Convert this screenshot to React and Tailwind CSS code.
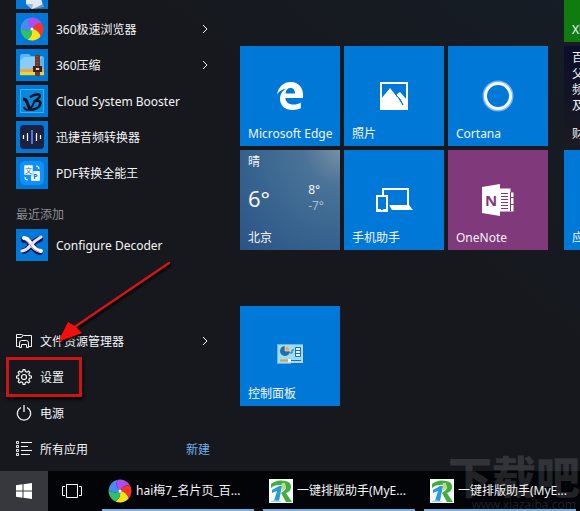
import clsx from 'clsx';

// 32px square behind every entry of the program list
function AppIcon({ children }) {
  return (
    <svg viewBox="0 0 32 32" className="h-8 w-8 shrink-0 bg-[#0078d7]" aria-hidden="true">
      {children}
    </svg>
  );
}

const PETALS = [
  { color: '#b04df0', turn: -12 },
  { color: '#f5352c', turn: 60 },
  { color: '#f9e21c', turn: 132 },
  { color: '#2fc06a', turn: 204 },
  { color: '#4a8af5', turn: 276 },
];

function Pinwheel() {
  return (
    <g>
      {PETALS.map(({ color, turn }) => (
        <path
          key={turn}
          d="M12 12Q8 6 12 .5A11.500 11.500 0 0 1 22.900 8.400Q16.500 6.300 12 12Z"
          fill={color}
          transform={`rotate(${turn} 12 12)`}
        />
      ))}
      <circle cx="12" cy="12" r="1.500" fill="#fff" />
    </g>
  );
}

function NotepadIcon() {
  return (
    <AppIcon>
      <path d="M10 20L24 16L27 29L16 32L10 27Z" fill="#dfe9f3" />
      <path d="M10 27L16 32L17 27Z" fill="#9fb9d3" />
      <path d="M27 27L28 30L17 32Z" fill="#7f97ad" />
    </AppIcon>
  );
}

function BrowserIcon() {
  return (
    <AppIcon>
      <g transform="translate(4 4)">
        <Pinwheel />
      </g>
    </AppIcon>
  );
}

function ZipIcon() {
  return (
    <AppIcon>
      <path d="M4 7Q4 5 6 5H13L15 7H26Q28 7 28 9V20H4Z" fill="#5db4ee" />
      <path d="M8 8H26L16 20H4V12Z" fill="#86cdf8" />
      <rect x="4" y="20" width="24" height="3" fill="#f4a53a" />
      <rect x="4" y="23" width="24" height="3" fill="#d9d85a" />
      <rect x="4" y="26" width="24" height="1" fill="#4a8f4d" />
      <rect x="19" y="6" width="5" height="21" rx="1" fill="#73341f" />
      <path d="M21 7V18" stroke="#b26d44" strokeDasharray="1 2" />
      <rect x="18" y="18" width="7" height="4" fill="none" stroke="#3a2017" strokeWidth="2" />
      <rect x="20" y="19" width="3" height="2" fill="#e9c79a" />
    </AppIcon>
  );
}

function BoosterIcon() {
  return (
    <AppIcon>
      <rect x="4.500" y="4.500" width="23" height="23" fill="#0b87dc" stroke="#2fb5f7" />
      <g fill="none" stroke="#04121f" strokeLinejoin="round">
        <path d="M7 14Q10 14 11 17Q12 21 14 24" strokeWidth="3" />
        <path d="M8 22Q9 26 14 24Q17 21 19 15" strokeWidth="2" />
        <path d="M14 12Q21 8 23.500 10Q25 12 19 16Q24 15 24.500 18Q24 23 17 24.500Q14 25 12 24" strokeWidth="2.500" />
      </g>
    </AppIcon>
  );
}

function AudioIcon() {
  return (
    <AppIcon>
      <rect x="4" y="4" width="24" height="24" rx="4" fill="#1b2140" />
      <path d="M7.500 14V18M24.500 14V18" stroke="#fff" strokeWidth="1.200" />
      <path d="M11.500 12V20M20.500 12V20" stroke="#fff" strokeWidth="1.200" />
      <path d="M16 9V23" stroke="#5272e6" strokeWidth="2" />
    </AppIcon>
  );
}

function PdfIcon() {
  return (
    <AppIcon>
      <rect x="4" y="4" width="24" height="24" rx="5" fill="#1190fb" />
      <rect x="15" y="14" width="9" height="10" rx="1" fill="#e6f5ff" />
      <rect x="8" y="8" width="9" height="10" rx="1" fill="#fff" stroke="#1190fb" strokeWidth=".5" />
      <path d="M20 9Q23 9 23 12M9 20Q9 23 12 23" fill="none" stroke="#e6f5ff" strokeWidth="1.200" />
      <text x="12.500" y="15.500" fontSize="7" textAnchor="middle" fill="#1473c8">文</text>
      <text x="19.500" y="21.500" fontSize="7" fontWeight="700" textAnchor="middle" fill="#1473c8">P</text>
    </AppIcon>
  );
}

function DecoderIcon() {
  return (
    <AppIcon>
      <g fill="none" strokeLinecap="round" strokeLinejoin="round">
        <path d="M8 11Q11 10 15 15Q19 22 24 23" stroke="#0d1464" strokeWidth="6" />
        <path d="M24 10Q18 12 14 17Q10 22 8 22" stroke="#0d1464" strokeWidth="6" />
        <path d="M8 9Q12 9 15 15Q19 21 25 22" stroke="#fff" strokeWidth="4" />
        <path d="M25 8Q18 12 14 17Q11 21 6 22" stroke="#e4e4ea" strokeWidth="3" />
        <path d="M9 11Q13 13 15 17Q18 22 23 23" stroke="#a5a3b4" />
      </g>
    </AppIcon>
  );
}

function ExplorerIcon() {
  return (
    <svg viewBox="0 0 16 16" className="h-4 w-4 shrink-0" fill="none" stroke="currentColor" aria-hidden="true">
      <path d="M3 13.500H.5V1.500H5.500L7.500 2.500H15.500V13.500H13" />
      <path d="M.5 4.500H5L7.500 2.500" />
      <path d="M3.500 14.500V10Q3.500 7.500 5.500 7.500H10.500Q12.500 7.500 12.500 10V14.500H10.500V11.500H5.500V14.500Z" />
    </svg>
  );
}

function GearIcon() {
  return (
    <svg viewBox="0 0 16 16" className="h-4 w-4 shrink-0" fill="none" stroke="currentColor" strokeWidth="1.200" aria-hidden="true">
      <circle cx="8" cy="8" r="2.500" />
      <path
        strokeLinejoin="round"
        d="M6.700 2.500L7 .6H9L9.300 2.500L10.900 3.200L12.500 2.100L13.900 3.500L12.800 5.100L13.500 6.700L15.400 7V9L13.500 9.300L12.800 10.900L13.900 12.500L12.500 13.900L10.900 12.800L9.300 13.500L9 15.400H7L6.700 13.500L5.100 12.800L3.500 13.900L2.100 12.500L3.200 10.900L2.500 9.300L.6 9V7L2.500 6.700L3.200 5.100L2.100 3.500L3.500 2.100L5.100 3.200Z"
      />
    </svg>
  );
}

function PowerIcon() {
  return (
    <svg viewBox="0 0 16 16" className="h-4 w-4 shrink-0" fill="none" stroke="currentColor" strokeWidth="1.300" aria-hidden="true">
      <path d="M8 0V7" />
      <path d="M5 2.500A6.700 6.700 0 1 0 11 2.500" />
    </svg>
  );
}

function AllAppsIcon() {
  return (
    <svg viewBox="0 0 16 16" className="h-4 w-4 shrink-0" fill="none" stroke="currentColor" aria-hidden="true">
      <path d="M.5 .5H2.500V2.500H.5ZM.5 4.500H2.500V6.500H.5ZM.5 8.500H2.500V10.500H.5ZM.5 12.500H2.500V14.500H.5Z" />
      <path d="M5 1.500H16M5 5.500H12M5 9.500H16M5 13.500H14" />
    </svg>
  );
}

function Chevron() {
  return (
    <svg viewBox="0 0 10 10" className="ml-auto h-[10px] w-[10px] shrink-0" fill="none" stroke="currentColor" aria-hidden="true">
      <path d="M3 1L7 5L3 9" />
    </svg>
  );
}

function EdgeLogo() {
  return (
    <svg viewBox="0 0 28 28" className="h-7 w-7" fill="#fff" aria-hidden="true">
      <path d="M1 12.500C2.300 4.800 7.800 0 14.800 0C22.600 0 27 5.600 27 12.600V16H9.300C9.600 20.500 13.300 22.500 17.500 22.500C20.200 22.500 22.700 21.700 24.800 20.400V26.300C22.500 27.500 19.600 28 16.700 28C8.900 28 4 23.600 4 16.800C4 12.300 6.400 8.500 10.500 6.400C6.200 6.800 3 9.300 1 12.500ZM9.500 11.500H19C19 7.800 17.100 6.100 14.400 6.100C11.700 6.100 9.900 8.100 9.500 11.500Z" />
    </svg>
  );
}

function PhotosLogo() {
  return (
    <svg viewBox="0 0 28 28" className="h-7 w-7" aria-hidden="true">
      <rect x="1" y="1" width="26" height="26" fill="none" stroke="#fff" strokeWidth="2" />
      <path d="M1 17L10 6L17 15V12L20 10L27 18V27H1Z" fill="#fff" />
      <path d="M16 13L20 17L23 23L18 15Z" fill="#0078d7" stroke="#0078d7" />
    </svg>
  );
}

function CortanaLogo() {
  return (
    <svg viewBox="0 0 32 32" className="h-8 w-8" fill="none" aria-hidden="true">
      <circle cx="16" cy="16" r="14.500" stroke="#6cb6f1" strokeWidth="2" />
      <circle cx="16" cy="16" r="12.500" stroke="#fff" strokeWidth="3" />
    </svg>
  );
}

function PhoneLogo() {
  return (
    <svg viewBox="0 0 38 24" className="h-6 w-[38px]" aria-hidden="true">
      <path d="M8 7V1H33V17" fill="none" stroke="#fff" strokeWidth="2" />
      <path d="M14 17H34L38 22H17Z" fill="#fff" />
      <rect x="2" y="8" width="10" height="15" fill="none" stroke="#fff" strokeWidth="2" />
      <rect x="1" y="21" width="12" height="3" fill="#fff" />
      <rect x="6" y="21" width="2" height="1" fill="#0078d7" />
    </svg>
  );
}

function OneNoteLogo() {
  return (
    <svg viewBox="0 0 32 32" className="h-8 w-8" aria-hidden="true">
      <path d="M18 4.500H28.500V8.500H31.500V27.500H18Z" fill="#fff" />
      <path d="M19 9.500H26M19 12.500H26M19 15.500H26M19 18.500H26M19 21.500H26M19 24.500H26" stroke="#80397b" />
      <path d="M28.500 8V27M28.500 13.500H32M28.500 20.500H32" stroke="#80397b" />
      <path d="M0 3L18 0V32L0 29Z" fill="#fff" />
      <text x="9" y="21.500" fontSize="15" fontWeight="700" textAnchor="middle" fill="#80397b">N</text>
    </svg>
  );
}

function ControlPanelLogo() {
  return (
    <svg viewBox="0 0 27 24" className="h-6 w-[27px]" aria-hidden="true">
      <rect x=".5" y=".5" width="26" height="19" fill="#9edcf8" stroke="#5db9e8" />
      <path d="M26.500 0V19.500H14" fill="none" stroke="#1b6fa8" />
      <circle cx="8" cy="7" r="5" fill="#1f6fae" />
      <path d="M8 7V2A5 5 0 0 1 13 7Z" fill="#f2a64b" stroke="#fff" strokeWidth=".5" />
      <path d="M13 9H15V6H17" fill="none" stroke="#1f6fae" />
      <path d="M18.500 3.500H23.500V12.500H18.500ZM18.500 6.500H23.500M18.500 9.500H23.500" fill="#d8f3ff" stroke="#1f6fae" />
      <path d="M3 16.500H11" stroke="#e59a3c" strokeWidth="2" />
      <path d="M14 16.500H24" stroke="#1f6fae" />
      <rect x="11" y="15" width="3" height="3" fill="#fff" />
    </svg>
  );
}

function TypesetIcon() {
  return (
    <svg viewBox="0 0 24 24" className="h-6 w-6 shrink-0 bg-[#f6fbf6]" aria-hidden="true">
      <path d="M2 5Q8 0 16 2Q23 3 22 9Q21 13 17 14L23 23H17L12 14Q17 11 17 8Q16 5 10 6Q5 6 2 9Z" fill="#43ad43" />
      <path d="M13 4H16L17 9L13 12Z" fill="#b9e07a" />
      <path d="M3 11L10 7H13L10 22H5L8 12L3 14Z" fill="#2c9ad6" />
      <path d="M2 22Q8 20 13 23H2Z" fill="#9fd8ee" />
    </svg>
  );
}

const PROGRAMS = [
  { name: '记事本', icon: <NotepadIcon /> },
  { name: '360极速浏览器', icon: <BrowserIcon />, more: true },
  { name: '360压缩', icon: <ZipIcon />, more: true },
  { name: 'Cloud System Booster', icon: <BoosterIcon /> },
  { name: '迅捷音频转换器', icon: <AudioIcon /> },
  { name: 'PDF转换全能王', icon: <PdfIcon /> },
];

const PLACES = [
  { name: '文件资源管理器', icon: <ExplorerIcon />, more: true },
  { name: '设置', icon: <GearIcon />, marked: true },
  { name: '电源', icon: <PowerIcon /> },
];

const TASKS = [
  {
    title: 'hai梅7_名片页_百...',
    icon: (
      <svg viewBox="0 0 24 24" className="h-6 w-6 shrink-0" aria-hidden="true">
        <Pinwheel />
      </svg>
    ),
  },
  { title: '一键排版助手(MyE...', icon: <TypesetIcon /> },
  { title: '一键排版助手(MyE...', icon: <TypesetIcon /> },
];

function MenuRow({ name, icon, more, marked }) {
  return (
    <button className="relative flex h-9 w-full shrink-0 items-center gap-2 text-left">
      {icon}
      <span className="pt-[2px]">{name}</span>
      {more && <Chevron />}
      {marked && (
        <span className="absolute -top-[2px] -left-[10px] h-10 w-[76px] border-3 border-[#cc1417] shadow-[1px_2px_3px_#000]" />
      )}
    </button>
  );
}

function Tile({ name, children, className }) {
  return (
    <button className={clsx('relative flex h-[100px] w-[100px] items-center justify-center', className || 'bg-[#0078d7]')}>
      {children}
      <span className="absolute bottom-1 left-2 whitespace-nowrap">{name}</span>
    </button>
  );
}

function WeatherTile() {
  return (
    <button className="flex h-[100px] w-[100px] flex-col justify-between bg-[radial-gradient(circle_at_100%_0%,#7690a4_0%,#4b7398_25%,#38658f_60%,#2c5287_100%)] px-2 py-1 text-left">
      <span>晴</span>
      <span className="flex items-center justify-between pr-2 pb-1">
        <span className="text-[22px] leading-8">6°</span>
        <span className="flex flex-col leading-4">
          <span>8°</span>
          <span className="text-[#a9bed6]">-7°</span>
        </span>
      </span>
      <span>北京</span>
    </button>
  );
}

function StartMenu() {
  return (
    <nav className="flex w-60 shrink-0 flex-col justify-end pr-[30px] pb-1 pl-4">
      {PROGRAMS.map((program) => (
        <MenuRow key={program.name} {...program} />
      ))}
      <h2 className="flex h-9 shrink-0 items-end pb-1 text-[#8c8f94]">最近添加</h2>
      <MenuRow name="Configure Decoder" icon={<DecoderIcon />} />
      <div className="relative mt-15 shrink-0">
        {PLACES.map((place) => (
          <MenuRow key={place.name} {...place} />
        ))}
        <div className="flex items-center justify-between">
          <div>
            <MenuRow name="所有应用" icon={<AllAppsIcon />} />
          </div>
          <span className="pt-[2px] text-[#6fb1ea]">新建</span>
        </div>

        {/* Pointer to the settings entry */}
        <svg viewBox="0 0 120 86" className="pointer-events-none absolute -top-[64px] left-[38px] h-[86px] w-[120px] drop-shadow-[1px_2px_1px_#000]" aria-hidden="true">
          <path d="M115 4L22 67" stroke="#d41515" strokeWidth="2.500" strokeLinecap="round" />
          <path d="M4 83L14 63L21 67L28 74Z" fill="#f01010" />
        </svg>
      </div>
    </nav>
  );
}

function Tiles() {
  return (
    <div className="flex items-start gap-4">
      <div className="mt-[46px] flex w-[308px] shrink-0 flex-col gap-14">
        <div className="grid grid-cols-3 gap-1">
          <Tile name="Microsoft Edge"><EdgeLogo /></Tile>
          <Tile name="照片"><PhotosLogo /></Tile>
          <Tile name="Cortana"><CortanaLogo /></Tile>
          <WeatherTile />
          <Tile name="手机助手"><PhoneLogo /></Tile>
          <Tile name="OneNote" className="bg-[#80397b]"><OneNoteLogo /></Tile>
        </div>
        <Tile name="控制面板"><ControlPanelLogo /></Tile>
      </div>
      <div className="flex w-[100px] shrink-0 flex-col gap-1">
        <button className="flex h-[42px] items-end bg-[#107c10] px-2 pb-1">Xbox</button>
        <button className="flex h-[100px] flex-col justify-between bg-linear-to-b from-[#0b0d2a] to-[#1b1a22] px-2 pt-1 pb-1 text-left leading-4">
          <span>百岁老人<br />父亲节视<br />频走红网<br />及时更新</span>
          <span>财经</span>
        </button>
        <Tile name="应用商店" />
      </div>
    </div>
  );
}

function Taskbar() {
  return (
    <footer className="flex h-10 shrink-0 bg-[#030408]">
      <button className="flex w-12 shrink-0 items-center justify-center bg-[#37383d]" aria-label="开始">
        <svg viewBox="0 0 16 16" className="h-4 w-4" fill="#fff" aria-hidden="true">
          <path d="M0 2.300L6.500 1.300V7.500H0ZM7.500 1.200L16 0V7.500H7.500ZM0 8.500H6.500V14.700L0 13.700ZM7.500 8.500H16V16L7.500 14.800Z" />
        </svg>
      </button>
      <button className="flex w-12 shrink-0 items-center justify-center" aria-label="任务视图">
        <svg viewBox="0 0 20 14" className="h-[14px] w-5" fill="none" stroke="#fff" aria-hidden="true">
          <path d="M4.500 .5H15.500V13.500H4.500ZM3 2.500H.5V11.500H3M17 2.500H19.500V11.500H17" />
        </svg>
      </button>
      <div className="ml-[6px] flex min-w-0 gap-[9px]">
        {TASKS.map(({ title, icon }, i) => (
          <button key={i} className="flex w-[152px] items-center gap-1 border-b-2 border-[#78afdf] px-[6px] pt-[2px] whitespace-nowrap">
            {icon}
            <span>{title}</span>
          </button>
        ))}
      </div>
    </footer>
  );
}

export default function App() {
  return (
    <div className="relative flex h-screen w-full flex-col overflow-hidden bg-[#16181d] font-['Noto_Sans','Noto_Sans_CJK_SC',sans-serif] text-xs text-[#f4f5f7]">
      <main className="flex min-h-0 flex-1 overflow-hidden bg-linear-to-tr from-[#16181d] from-60% to-[#161d26]">
        <StartMenu />
        <Tiles />
      </main>
      <Taskbar />
      <div className="pointer-events-none absolute right-0 bottom-0 flex flex-col items-end text-white/12" aria-hidden="true">
        <span className="text-[44px] leading-[44px] font-black">下载吧</span>
        <span className="pr-1 text-xs leading-3">www.xiazaiba.com</span>
      </div>
    </div>
  );
}
